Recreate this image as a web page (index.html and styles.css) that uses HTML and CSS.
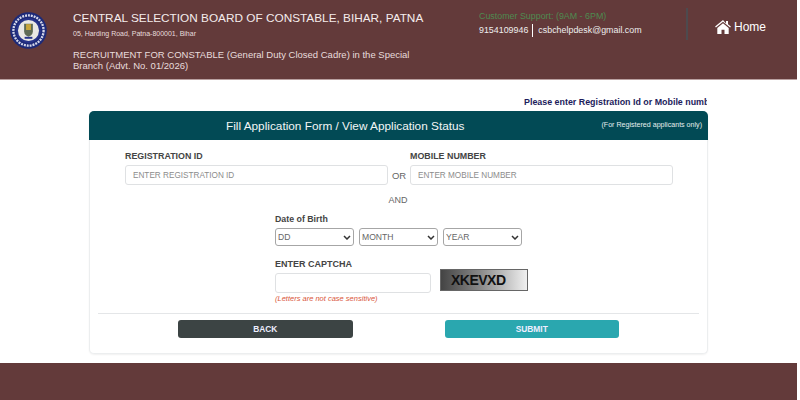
FILE: index.html
```html
<!DOCTYPE html>
<html lang="en">
<head>
<meta charset="utf-8">
<title>Application</title>
<link rel="stylesheet" href="styles.css">
</head>
<body>
<div class="page">
  <header class="top">
    <div class="logo">
      <svg width="37" height="37" viewBox="0 0 38 38">
        <circle cx="19" cy="19" r="18.8" fill="#1d2a78"/>
        <circle cx="19" cy="19" r="15.500" fill="none" stroke="#d5d8ea" stroke-width="2.400" stroke-dasharray="2 1"/>
        <circle cx="19" cy="19" r="12.800" fill="#27348b"/>
        <circle cx="19" cy="19" r="10.800" fill="#e9e8e4"/>
        <path d="M14.500 12h9v8c0 3-2.500 4.500-4.500 5.500-2-1-4.500-2.500-4.500-5.500z" fill="#5f6b55"/>
        <rect x="16.500" y="12.500" width="5" height="6" fill="#c9a63a"/>
        <rect x="15" y="25.500" width="8" height="2" fill="#27348b"/>
      </svg>
    </div>
    <div class="title-block">
      <h1 class="org">CENTRAL SELECTION BOARD OF CONSTABLE, BIHAR, PATNA</h1>
      <p class="addr">05, Harding Road, Patna-800001, Bihar</p>
      <p class="advt">RECRUITMENT FOR CONSTABLE (General Duty Closed Cadre) in the Special Branch (Advt. No. 01/2026)</p>
    </div>
    <div class="support">
      <div class="support-head">Customer Support: (9AM - 6PM)</div>
      <div class="support-row"><span class="phone">9154109946</span><span class="mail">csbchelpdesk@gmail.com</span></div>
    </div>
    <div class="home">
      <svg width="16" height="14" viewBox="0 0 16 14"><path d="M8 0 .1 6.600l.8 1L8 1.800l7.100 5.800.8-1-2.900-2.400V1h-2v2.500z M2.300 8v6h4.200V9.800h3V14h4.200V8L8 3.300z" fill="#fff"/></svg>
      <span>Home</span>
    </div>
  </header>
  <main class="content">
    <div class="notice"><span>Please enter Registration Id or Mobile number</span></div>
    <section class="card">
      <div class="card-head">
        <h2 class="card-title">Fill Application Form / View Application Status</h2>
        <span class="card-note">(For Registered applicants only)</span>
      </div>
      <form class="form">
        <div class="id-row">
          <label class="field">
            <span class="lbl">REGISTRATION ID</span>
            <input class="input" type="text" placeholder="ENTER REGISTRATION ID">
          </label>
          <span class="or">OR</span>
          <label class="field">
            <span class="lbl">MOBILE NUMBER</span>
            <input class="input" type="text" placeholder="ENTER MOBILE NUMBER">
          </label>
        </div>
        <div class="and">AND</div>
        <div class="center-col">
          <div class="dob-label">Date of Birth</div>
          <div class="dob-row">
            <select class="sel"><option>DD</option></select>
            <select class="sel"><option>MONTH</option></select>
            <select class="sel"><option>YEAR</option></select>
          </div>
          <div class="cap-label">ENTER CAPTCHA</div>
          <div class="cap-row">
            <input class="input cap-input" type="text">
            <div class="cap-img">XKEVXD</div>
          </div>
          <div class="cap-note">(Letters are not case sensitive)</div>
        </div>
        <div class="actions">
          <button class="btn btn-back" type="button">BACK</button>
          <button class="btn btn-submit" type="button">SUBMIT</button>
        </div>
      </form>
    </section>
  </main>
  <footer class="bottom"></footer>
</div>
</body>
</html>
```
FILE: styles.css
```css
* { box-sizing: border-box; }
html, body { margin: 0; height: 100%; overflow: hidden; background: #fff; }
body { font-family: "Liberation Sans", Arial, sans-serif; color: #333; }
.page { width: 797px; height: 400px; display: flex; flex-direction: column; }

.top { height: 80px; flex: none; background: #633a3a; display: flex; align-items: flex-start; color: #fff; border-bottom: 1px solid #b9a0a0; }
.logo { width: 73px; flex: none; padding: 12px 0 0 10px; }
.logo svg { display: block; }
.title-block { width: 380px; flex: none; padding-top: 11px; }
.org { margin: 0; font-size: 11.8px; line-height: 15px; font-weight: 400; color: #f4ecec; white-space: nowrap; }
.addr { margin: 3px 0 0; font-size: 7px; line-height: 9px; color: #e8dcdc; }
.advt { margin: 11px 0 0; width: 345px; font-size: 9.5px; line-height: 11px; color: #e8dcdc; }
.support { width: 207px; margin-left: 26px; padding-top: 11px; flex: none; font-size: 8.9px; }
.support-head { color: #4e8a50; line-height: 11px; }
.support-row { display: flex; align-items: center; height: 14px; color: #eee; font-size: 8.9px; margin-top: 1px; }
.phone { padding-right: 4px; border-right: 1.5px solid #fff; line-height: 13px; }
.mail { padding-left: 5px; }
.home { height: 32px; margin-top: 8px; width: 111px; flex: none; border-left: 2px solid #4d4a4e; padding: 6px 0 0 27px; display: flex; align-items: center; gap: 3px; font-size: 12px; color: #fff; }
.home svg { display: block; }

.content { flex: 1; display: flex; flex-direction: column; align-items: center; }
.notice { width: 619px; margin-top: 16px; height: 14px; overflow: hidden; display: flex; justify-content: flex-end; font-size: 8.9px; font-weight: 700; line-height: 12px; color: #1c1c5c; white-space: nowrap; padding-right: 1px; }
.notice span { display: block; width: 183px; overflow: hidden; }
.card { width: 619px; margin-top: 1px; height: 243px; border: 1px solid #eceeef; border-top: 0; border-radius: 5px; box-shadow: 0 1px 2px rgba(0,0,0,.06); background: #fff; }
.card-head { height: 29px; margin: 0 -1px; background: #024a55; border-radius: 5px 5px 0 0; display: flex; align-items: center; position: relative; color: #fff; }
.card-title { margin: 0; font-size: 11.8px; font-weight: 400; width: 100%; padding-left: 137px; color: #f2f6f6; }
.card-note { position: absolute; right: 6px; top: 10px; font-size: 7.1px; line-height: 9px; color: #e6eeee; }

.form { padding-top: 11px; }
.id-row { display: flex; padding-left: 35px; align-items: flex-end; }
.field { display: flex; flex-direction: column; width: 263px; }
.lbl { font-size: 8.9px; font-weight: 700; line-height: 10px; color: #444; margin-bottom: 4px; }
.input { height: 20px; width: 100%; border: 1px solid #dfe1e3; border-radius: 3px; padding: 0 7px; font: 8.2px "Liberation Sans", Arial, sans-serif; background: #fff; outline: none; }
.input::placeholder { color: #8c8c8c; opacity: 1; }
.or { width: 22px; text-align: center; font-size: 9.5px; line-height: 18px; color: #666; }
.and { text-align: center; font-size: 9px; line-height: 10px; color: #666; margin-top: 10px; padding-right: 1px; }
.center-col { padding-left: 185px; margin-top: 9px; }
.dob-label { font-size: 8.8px; font-weight: 700; line-height: 10px; color: #444; }
.dob-row { display: flex; gap: 5px; margin-top: 4px; }
.sel { appearance: none; width: 79px; height: 18px; border: 1px solid #a6a6a6; border-radius: 3px; font: 8.6px "Liberation Sans", Arial, sans-serif; color: #666; padding: 0 0 0 2px; background: #fff url("data:image/svg+xml,%3Csvg xmlns='http://www.w3.org/2000/svg' width='8' height='5'%3E%3Cpath d='M1 1l3 3 3-3' fill='none' stroke='%23333' stroke-width='1.500'/%3E%3C/svg%3E") no-repeat right 2px center; }
.cap-label { font-size: 9px; font-weight: 700; line-height: 10px; color: #444; margin-top: 13px; }
.cap-row { display: flex; align-items: flex-start; gap: 9px; margin-top: 4px; }
.cap-input { width: 156px; }
.cap-img { width: 88px; height: 22px; margin-top: -4px; border: 1px solid #666; background: linear-gradient(90deg, #444 0%, #888 45%, #f0f0f0 100%); font-size: 14px; font-weight: 700; line-height: 20px; color: #111; padding-left: 10px; letter-spacing: -.5px; }
.cap-note { font-size: 7.5px; line-height: 9px; font-style: italic; color: #d9553b; margin-top: 1px; }
.actions { margin: 10px 8px 0; border-top: 1px solid #e4e6e8; padding-top: 6px; display: flex; justify-content: center; gap: 92px; }
.btn { width: 174.5px; height: 18px; border: 0; border-radius: 3px; font: 700 8.4px "Liberation Sans", Arial, sans-serif; color: #eef; }
.btn-back { background: #3c4444; }
.btn-submit { background: #2aa7af; }

.bottom { height: 37px; flex: none; background: #633a3a; }
```
